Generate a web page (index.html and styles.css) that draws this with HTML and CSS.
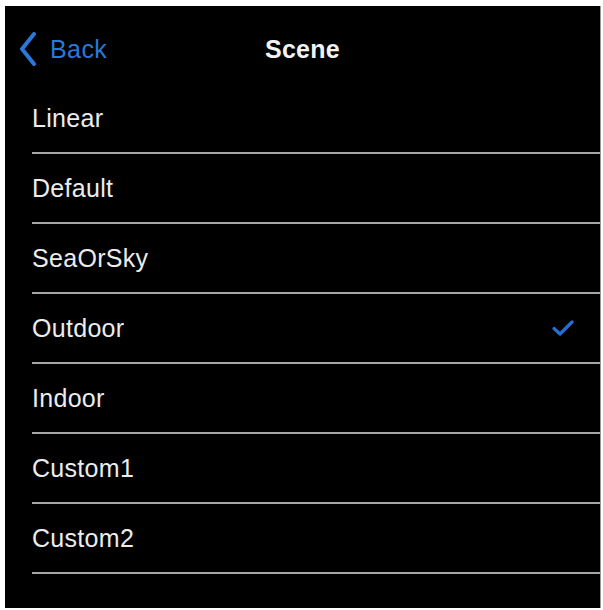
FILE: index.html
```html
<!DOCTYPE html>
<html>
<head>
<meta charset="utf-8">
<link rel="stylesheet" href="styles.css">
</head>
<body>
<div class="panel">
  <div class="navbar">
    <div class="back">
      <svg class="chevron" width="20" height="34" viewBox="0 0 20 34"><path d="M16 2 L4 17 L16 32" fill="none" stroke="#2a78dc" stroke-width="4" stroke-linecap="round" stroke-linejoin="round"/></svg>
      <span class="back-label">Back</span>
    </div>
    <div class="title">Scene</div>
  </div>
  <ul class="list">
    <li class="row"><span>Linear</span></li>
    <li class="row"><span>Default</span></li>
    <li class="row"><span>SeaOrSky</span></li>
    <li class="row"><span>Outdoor</span>
      <svg class="check" width="22" height="16" viewBox="0 0 22 16"><path d="M2 8.5 L8 14 L20 2" fill="none" stroke="#2270d6" stroke-width="3.2" stroke-linecap="round" stroke-linejoin="round"/></svg>
    </li>
    <li class="row"><span>Indoor</span></li>
    <li class="row"><span>Custom1</span></li>
    <li class="row"><span>Custom2</span></li>
  </ul>
</div>
</body>
</html>
```

FILE: styles.css
```css
html, body {
  margin: 0;
  padding: 0;
  background: #ffffff;
}
body {
  width: 603px;
  height: 610px;
  overflow: hidden;
  font-family: "Liberation Sans", Arial, sans-serif;
}
.panel {
  margin: 6px 0 0 5px;
  width: 595px;
  height: 602px;
  background: #000;
  border-right: 1px solid #9a9a9a;
}
.navbar {
  position: relative;
  height: 78px;
  box-sizing: border-box;
  padding-top: 8px;
  display: flex;
  align-items: center;
  justify-content: center;
}
.back {
  position: absolute;
  left: 13px;
  top: 8px;
  bottom: 0;
  display: flex;
  align-items: center;
  gap: 12px;
  color: #2a78dc;
}
.back-label {
  font-size: 25px;
  letter-spacing: 0.4px;
}
.title {
  color: #f2f2f2;
  font-weight: bold;
  font-size: 25px;
  letter-spacing: 0.3px;
}
.list {
  list-style: none;
  margin: 0;
  padding: 0 0 0 27px;
}
.row {
  height: 68px;
  border-bottom: 2px solid #a6a6a6;
  display: flex;
  align-items: center;
  justify-content: space-between;
  padding-right: 26px;
  color: #ececec;
  font-size: 25px;
  letter-spacing: 0.3px;
}
.check {
  display: block;
}
```
